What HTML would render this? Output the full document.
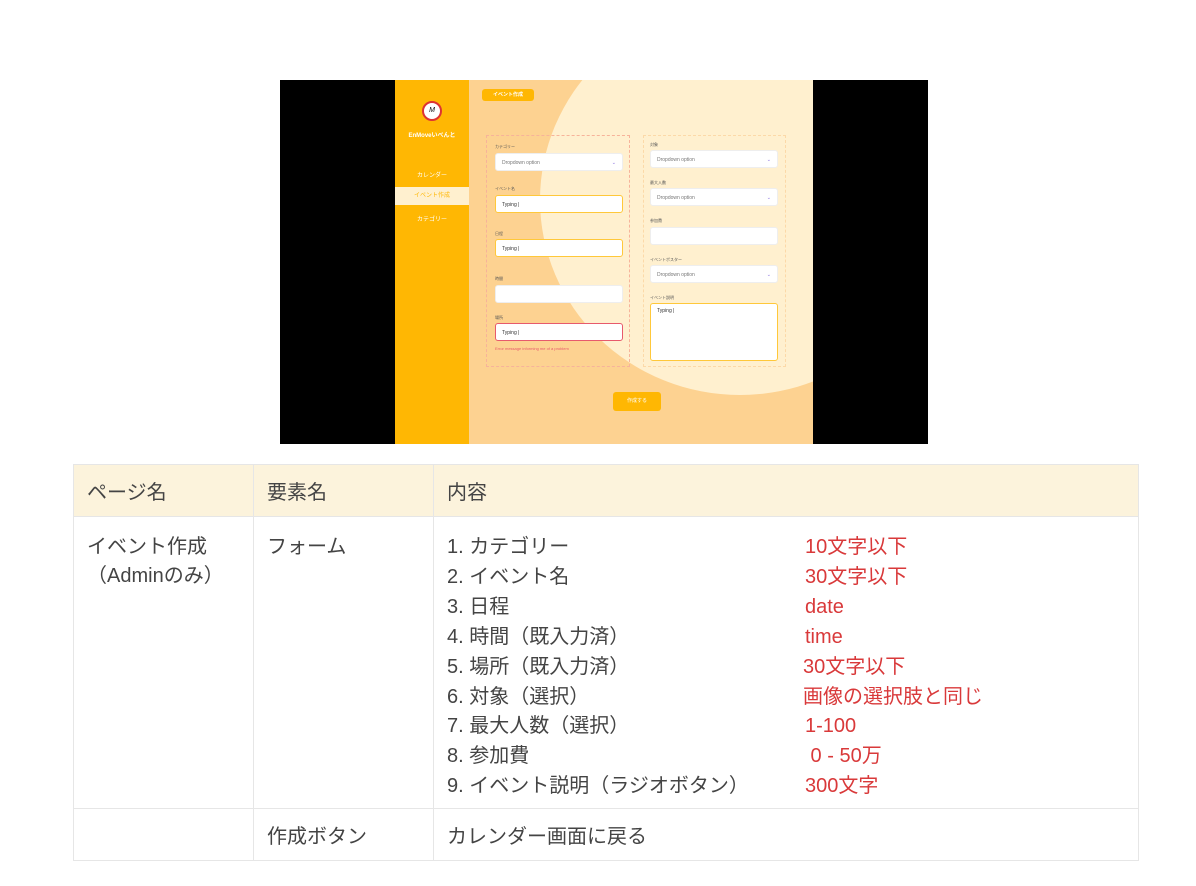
<!DOCTYPE html>
<html><head><meta charset="utf-8"><style>
body{margin:0;width:1196px;height:886px;background:#fff;font-family:"Liberation Sans","Noto Sans CJK JP",sans-serif;position:relative;overflow:hidden}
.abs{position:absolute}
.shot{left:280px;top:80px;width:648px;height:364px;background:#000}
.app{left:395px;top:80px;width:418px;height:364px;background:#fdd291;overflow:hidden}
.side{left:0;top:0;width:74px;height:364px;background:#ffb703}
.circ{left:145px;top:-75px;width:400px;height:390px;border-radius:50%;background:#fff0cf}
.lbl{font-size:4px;color:#555}
.in{background:#fff;border:1px solid #eee;border-radius:3px;height:18px;font-size:5px;color:#777;line-height:18px;padding-left:6px;box-sizing:border-box}
.y{border:1px solid #ffc83a;color:#333}
.r{border:1px solid #e75a6c;color:#333}
.chev{position:absolute;right:6px;top:0;color:#8a70e0;font-size:5px}
table{position:absolute;left:73px;top:464px;width:1066px;border-collapse:collapse;font-size:20px;color:#444;table-layout:fixed}
td{border:1px solid #e6e6e6;vertical-align:top;padding:0 13px}
.red{color:#d9393a}
</style></head><body>
<div class="abs shot"></div>
<div class="abs app">
<div class="abs circ"></div>
<div class="abs side">
<div class="abs" style="left:27px;top:21px;width:20px;height:20px;border-radius:50%;background:#fff;border:2px solid #d33;box-sizing:border-box;font-size:7px;text-align:center;line-height:16px;font-style:italic">M</div>
<div class="abs" style="left:0;top:50px;width:74px;text-align:center;color:#fff;font-size:6px;font-weight:bold">EnMoveいべんと</div>
<div class="abs" style="left:0;top:90px;width:74px;text-align:center;color:#fff;font-size:6px">カレンダー</div>
<div class="abs" style="left:0;top:107px;width:74px;height:18px;background:#fff0cf;text-align:center;color:#ffb703;font-size:6px;line-height:18px">イベント作成</div>
<div class="abs" style="left:0;top:134px;width:74px;text-align:center;color:#fff;font-size:6px">カテゴリー</div>
</div>
<div class="abs" style="left:87px;top:9px;width:52px;height:12px;background:#ffb703;border-radius:3px;color:#fff;font-size:5px;text-align:center;line-height:12px;font-weight:bold">イベント作成</div>
<div class="abs" style="left:91px;top:55px;width:144px;height:232px;border:1px dashed #f7b39a;box-sizing:border-box"></div>
<div class="abs" style="left:248px;top:55px;width:143px;height:232px;border:1px dashed #fcd9a8;box-sizing:border-box"></div>
<div class="abs lbl" style="left:100px;top:64px">カテゴリー</div>
<div class="abs in" style="left:100px;top:73px;width:128px">Dropdown option<span class="chev">⌄</span></div>
<div class="abs lbl" style="left:100px;top:106px">イベント名</div>
<div class="abs in y" style="left:100px;top:115px;width:128px">Typing |</div>
<div class="abs lbl" style="left:100px;top:151px">日程</div>
<div class="abs in y" style="left:100px;top:159px;width:128px">Typing |</div>
<div class="abs lbl" style="left:100px;top:196px">時間</div>
<div class="abs in" style="left:100px;top:205px;width:128px"></div>
<div class="abs lbl" style="left:100px;top:235px">場所</div>
<div class="abs in r" style="left:100px;top:243px;width:128px">Typing |</div>
<div class="abs" style="left:100px;top:266px;font-size:4px;color:#e75a6c">Error message informing me of a problem</div>
<div class="abs lbl" style="left:255px;top:62px">対象</div>
<div class="abs in" style="left:255px;top:70px;width:128px">Dropdown option<span class="chev">⌄</span></div>
<div class="abs lbl" style="left:255px;top:100px">最大人数</div>
<div class="abs in" style="left:255px;top:108px;width:128px">Dropdown option<span class="chev">⌄</span></div>
<div class="abs lbl" style="left:255px;top:138px">参加費</div>
<div class="abs in" style="left:255px;top:147px;width:128px"></div>
<div class="abs lbl" style="left:255px;top:177px">イベントポスター</div>
<div class="abs in" style="left:255px;top:185px;width:128px">Dropdown option<span class="chev">⌄</span></div>
<div class="abs lbl" style="left:255px;top:215px">イベント説明</div>
<div class="abs in y" style="left:255px;top:223px;width:128px;height:58px;line-height:14px">Typing |</div>
<div class="abs" style="left:218px;top:312px;width:48px;height:19px;background:#ffb703;border-radius:3px;color:#fff;font-size:5px;text-align:center;line-height:19px">作成する</div>
</div>
<table>
<colgroup><col style="width:180px"><col style="width:180px"><col></colgroup>
<tr style="height:52px;background:#fcf3dc"><td style="vertical-align:middle">ページ名</td><td style="vertical-align:middle">要素名</td><td style="vertical-align:middle">内容</td></tr>
<tr style="height:292px"><td style="padding-top:16px;line-height:29px">イベント作成<br>（Adminのみ）</td><td style="padding-top:16px;line-height:29px">フォーム</td>
<td style="padding-top:16px;line-height:29.9px"><div style="position:relative">1. カテゴリー<br>2. イベント名<br>3. 日程<br>4. 時間（既入力済）<br>5. 場所（既入力済）<br>6. 対象（選択）<br>7. 最大人数（選択）<br>8. 参加費<br>9. イベント説明（ラジオボタン）
<div class="red" style="position:absolute;left:358px;top:0">10文字以下<br>30文字以下<br>date<br>time<br><span style="margin-left:-2px">30文字以下</span><br><span style="margin-left:-2px">画像の選択肢と同じ</span><br>1-100<br>&nbsp;0 - 50万<br>300文字</div></div></td></tr>
<tr style="height:52px"><td></td><td style="vertical-align:middle">作成ボタン</td><td style="vertical-align:middle">カレンダー画面に戻る</td></tr>
</table>
</body></html>
